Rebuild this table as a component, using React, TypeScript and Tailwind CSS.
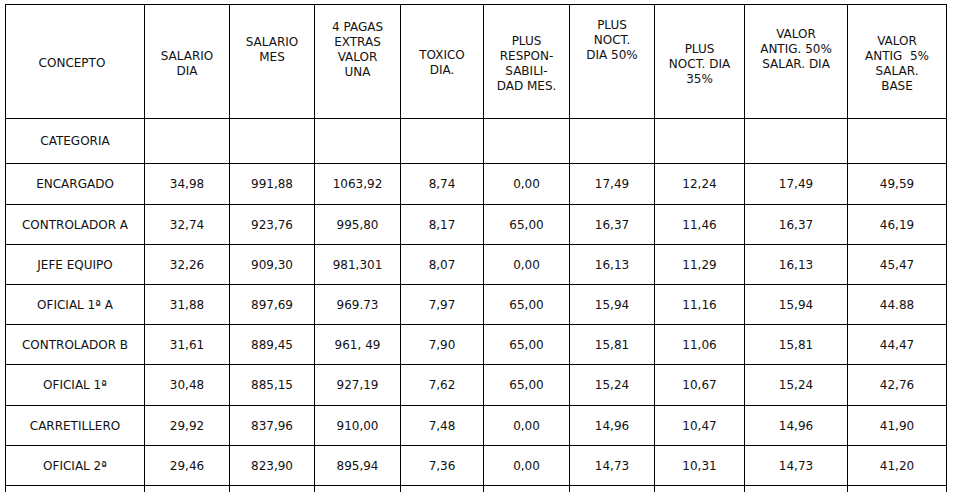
const cols = ['w-[139px]', 'w-[85px]', 'w-[85px]', 'w-[86px]', 'w-[83px]', 'w-[86px]', 'w-[85px]', 'w-[90px]', 'w-[103px]', 'w-[99px]'];

// header lines + top padding, mirrors the uneven spacing in the source doc
const headers: { lines: string[]; pt: string }[] = [
  { lines: ['CONCEPTO'], pt: 'pt-[51px] pr-1.5' },
  { lines: ['SALARIO', 'DIA'], pt: 'pt-[44px]' },
  { lines: ['SALARIO', 'MES'], pt: 'pt-[30px]' },
  { lines: ['4 PAGAS', 'EXTRAS', 'VALOR', 'UNA'], pt: 'pt-[15px]' },
  { lines: ['TOXICO', 'DIA.'], pt: 'pt-[43px]' },
  { lines: ['PLUS', 'RESPON-', 'SABILI-', 'DAD MES.'], pt: 'pt-[29px]' },
  { lines: ['PLUS', 'NOCT.', 'DIA 50%'], pt: 'pt-[13px]' },
  { lines: ['PLUS', 'NOCT. DIA', '35%'], pt: 'pt-[37px]' },
  { lines: ['VALOR', 'ANTIG. 50%', 'SALAR. DIA'], pt: 'pt-[22px]' },
  { lines: ['VALOR', 'ANTIG  5%', 'SALAR.', 'BASE'], pt: 'pt-[29px]' },
];

const rows: { h: string; cells: string[] }[] = [
  { h: 'h-[41px]', cells: ['ENCARGADO', '34,98', '991,88', '1063,92', '8,74', '0,00', '17,49', '12,24', '17,49', '49,59'] },
  { h: 'h-[40px]', cells: ['CONTROLADOR A', '32,74', '923,76', '995,80', '8,17', '65,00', '16,37', '11,46', '16,37', '46,19'] },
  { h: 'h-[40px]', cells: ['JEFE EQUIPO', '32,26', '909,30', '981,301', '8,07', '0,00', '16,13', '11,29', '16,13', '45,47'] },
  { h: 'h-[40px]', cells: ['OFICIAL 1ª A', '31,88', '897,69', '969.73', '7,97', '65,00', '15,94', '11,16', '15,94', '44.88'] },
  { h: 'h-[40px]', cells: ['CONTROLADOR B', '31,61', '889,45', '961, 49', '7,90', '65,00', '15,81', '11,06', '15,81', '44,47'] },
  { h: 'h-[41px]', cells: ['OFICIAL 1ª', '30,48', '885,15', '927,19', '7,62', '65,00', '15,24', '10,67', '15,24', '42,76'] },
  { h: 'h-[40px]', cells: ['CARRETILLERO', '29,92', '837,96', '910,00', '7,48', '0,00', '14,96', '10,47', '14,96', '41,90'] },
  { h: 'h-[40px]', cells: ['OFICIAL 2ª', '29,46', '823,90', '895,94', '7,36', '0,00', '14,73', '10,31', '14,73', '41,20'] },
];

export default function App() {
  return (
    <div className="w-[956px] h-[492px] overflow-hidden bg-white text-[#111] text-[12px] font-['DejaVu_Sans',Verdana,sans-serif]">
      <div className="ml-[5px] mt-[4px] w-max border-l border-t border-black">
        <div className="flex h-[114px]">
          {headers.map((hd, i) => (
            <div key={i} className={`${cols[i]} ${hd.pt} border-r border-b border-black text-center leading-[15px] whitespace-pre`}>
              {hd.lines.map((l, j) => (
                <div key={j}>{l}</div>
              ))}
            </div>
          ))}
        </div>
        <div className="flex h-[45px]">
          {cols.map((c, i) => (
            <div key={i} className={`${c} border-r border-b border-black flex items-center justify-center`}>
              {i === 0 ? 'CATEGORIA' : ''}
            </div>
          ))}
        </div>
        {rows.map((r, ri) => (
          <div key={ri} className={`flex ${r.h}`}>
            {r.cells.map((v, i) => (
              <div key={i} className={`${cols[i]} border-r border-b border-black flex items-center justify-center whitespace-pre`}>
                {v}
              </div>
            ))}
          </div>
        ))}
        <div className="flex h-[10px]">
          {cols.map((c, i) => (
            <div key={i} className={`${c} border-r border-black`} />
          ))}
        </div>
      </div>
    </div>
  );
}
